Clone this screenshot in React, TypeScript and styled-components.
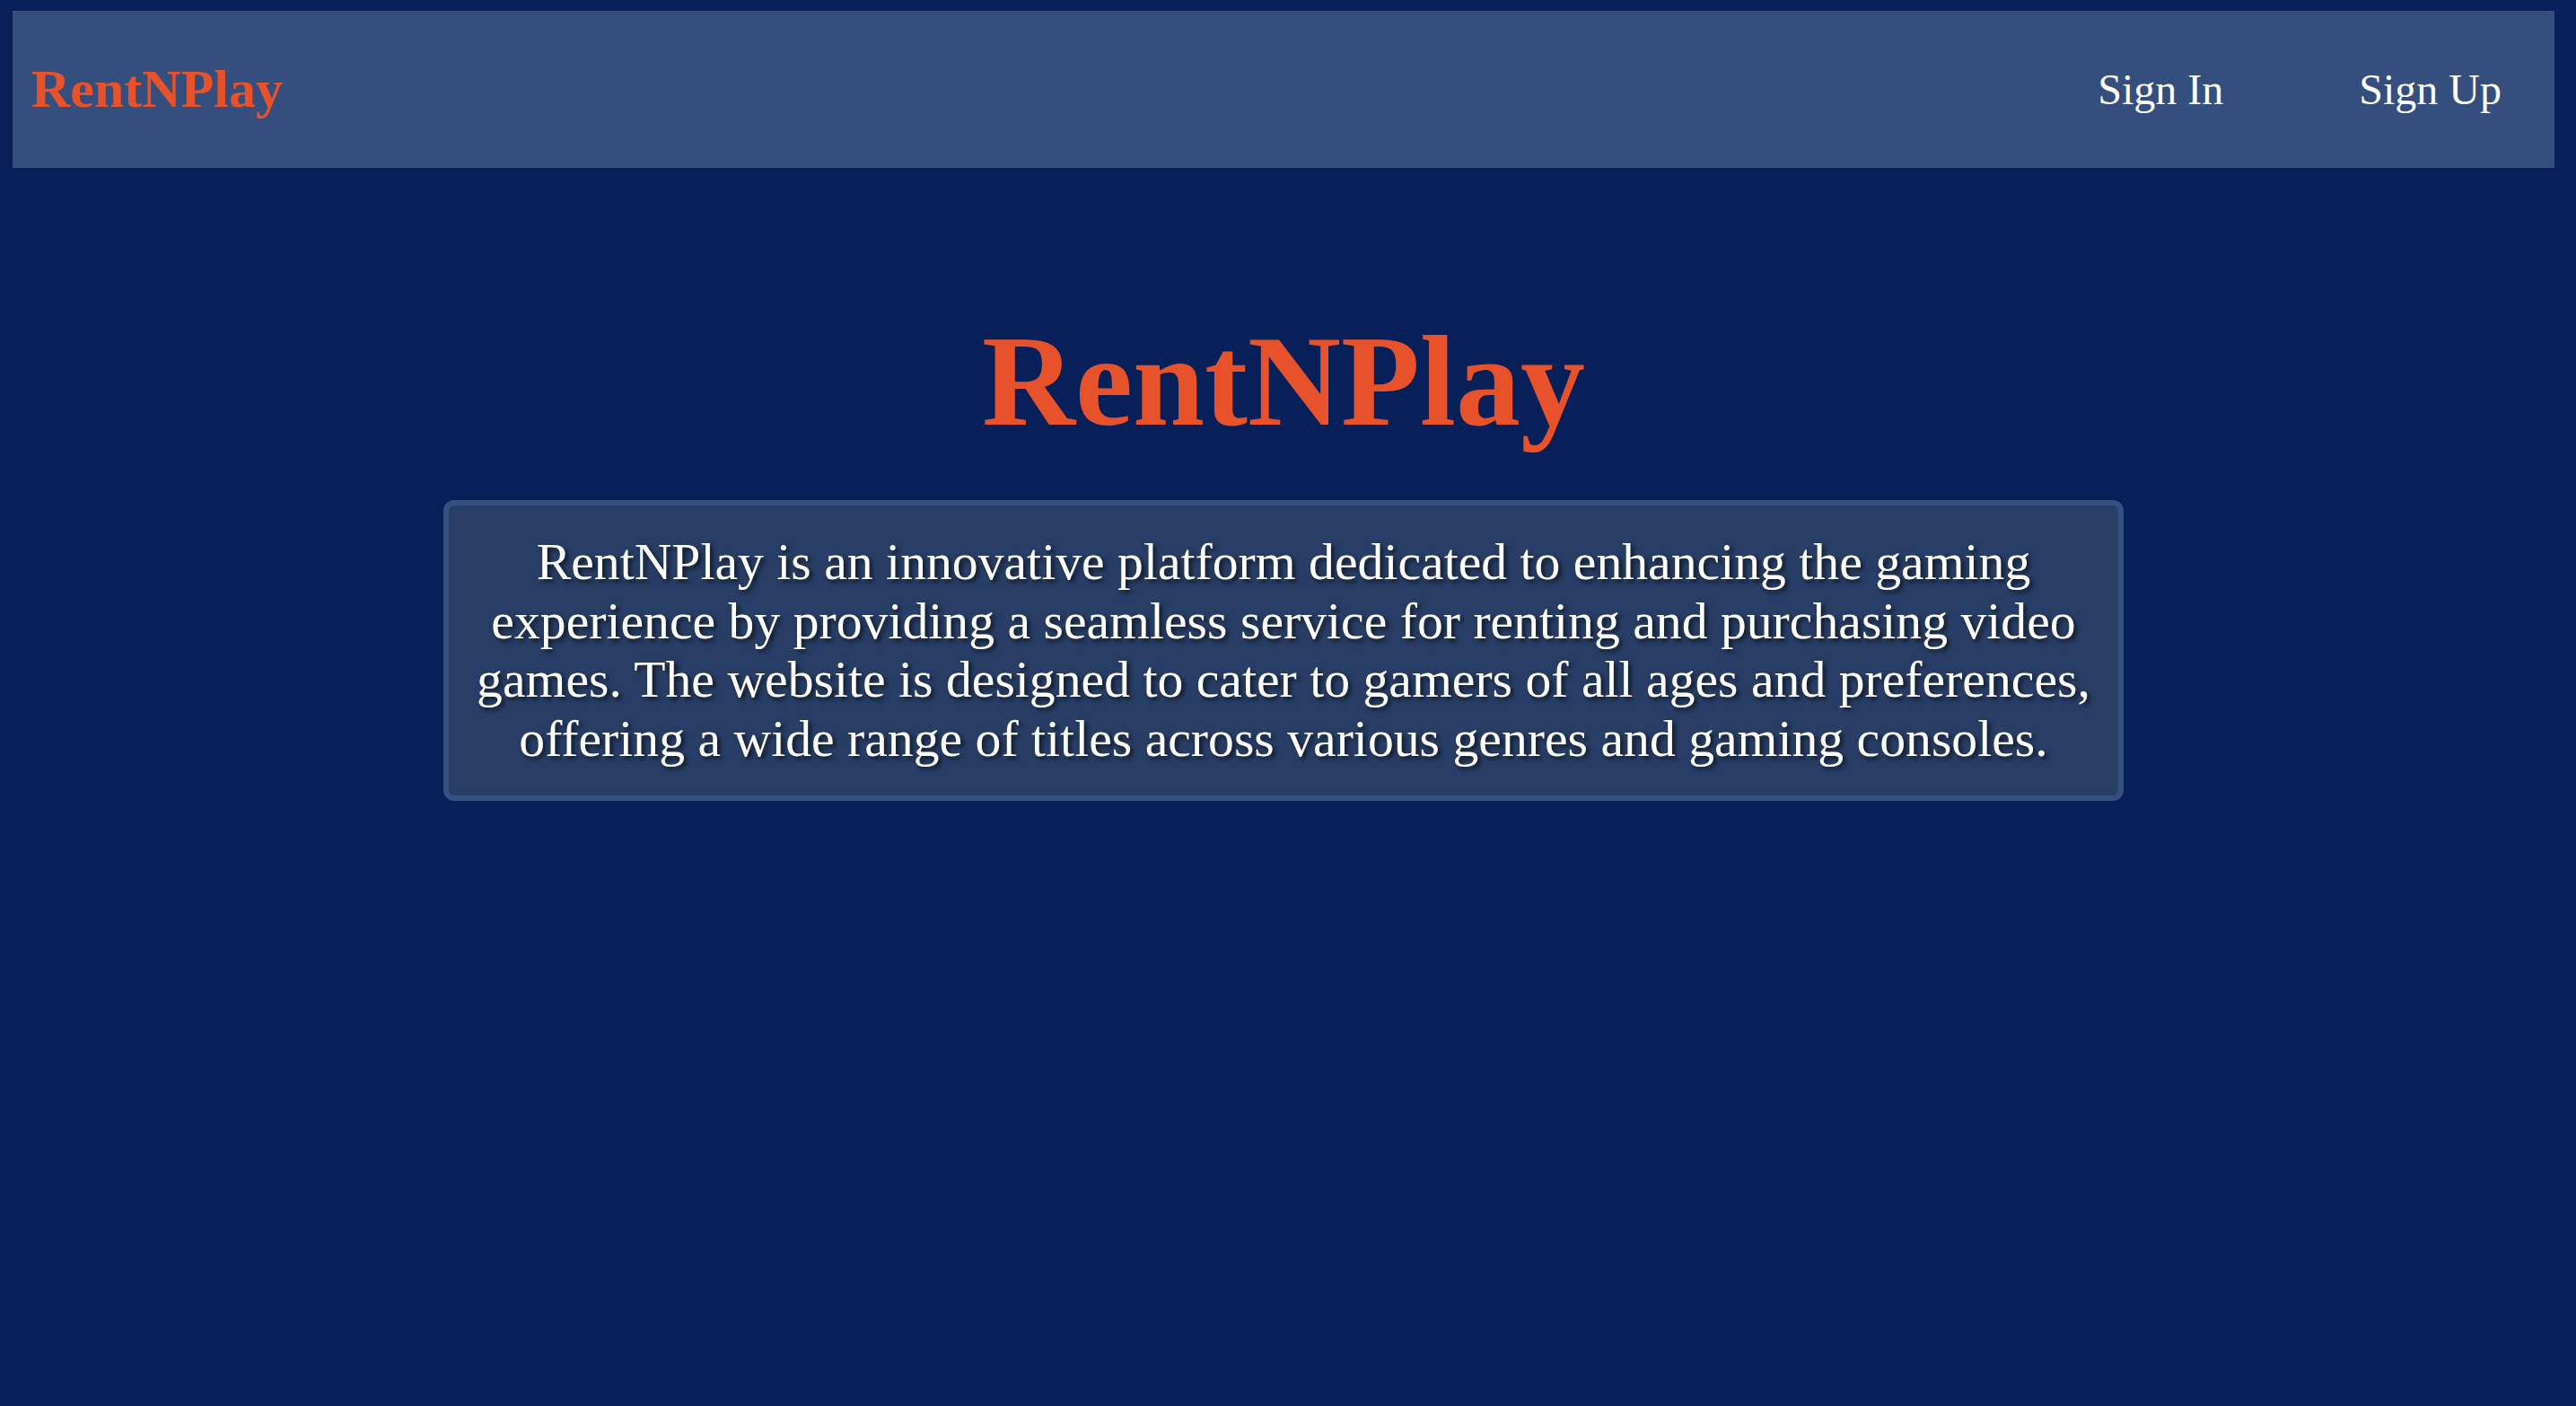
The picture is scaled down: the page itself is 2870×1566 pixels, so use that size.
import React from "react";
import styled, { createGlobalStyle } from "styled-components";

const GlobalStyle = createGlobalStyle`
  html, body {
    margin: 0;
    padding: 0;
    background: #08205a;
  }
  body {
    font-family: "Liberation Serif", "Times New Roman", serif;
    min-height: 100vh;
  }
`;

const Page = styled.div`
  min-height: 100vh;
  box-sizing: border-box;
  padding: 12px 24px 0 14px;
  background: #08205a;
`;

const NavBar = styled.nav`
  height: 175px;
  box-sizing: border-box;
  background: #344f7d;
  display: flex;
  align-items: center;
  justify-content: space-between;
  padding: 0 59px 0 21px;
`;

const Logo = styled.a`
  font-family: "Liberation Serif", "Times New Roman", serif;
  font-weight: 700;
  font-size: 60px;
  color: #e8522a;
  text-decoration: none;
`;

const NavLinks = styled.div`
  display: flex;
  align-items: center;
  gap: 151px;
`;

const NavLink = styled.a`
  font-family: "Liberation Serif", "Times New Roman", serif;
  font-size: 48px;
  color: #ffffff;
  text-decoration: none;
`;

const Hero = styled.main`
  display: flex;
  flex-direction: column;
  align-items: center;
  padding-top: 155px;
`;

const Title = styled.h1`
  margin: 0 0 50px;
  font-family: "Liberation Serif", "Times New Roman", serif;
  font-weight: 700;
  font-size: 144px;
  color: #e8522a;
`;

const Card = styled.section`
  width: 1872px;
  box-sizing: border-box;
  background: #283e66;
  border: 6px solid #35517f;
  border-radius: 12px;
  padding: 30px 20px 31px;
`;

const Description = styled.p`
  margin: 0;
  font-family: "Liberation Serif", "Times New Roman", serif;
  font-size: 57.7px;
  line-height: 65.6px;
  color: #ffffff;
  text-align: center;
  text-shadow: 3px 3px 5px rgba(0, 0, 0, 0.65);
`;

export default function App() {
  return (
    <>
      <GlobalStyle />
      <Page>
        <NavBar>
          <Logo href="#">RentNPlay</Logo>
          <NavLinks>
            <NavLink href="#">Sign In</NavLink>
            <NavLink href="#">Sign Up</NavLink>
          </NavLinks>
        </NavBar>
        <Hero>
          <Title>RentNPlay</Title>
          <Card>
            <Description>
              RentNPlay is an innovative platform dedicated to enhancing the gaming experience by
              providing a seamless service for renting and purchasing video games. The website is
              designed to cater to gamers of all ages and preferences, offering a wide range of
              titles across various genres and gaming consoles.
            </Description>
          </Card>
        </Hero>
      </Page>
    </>
  );
}
